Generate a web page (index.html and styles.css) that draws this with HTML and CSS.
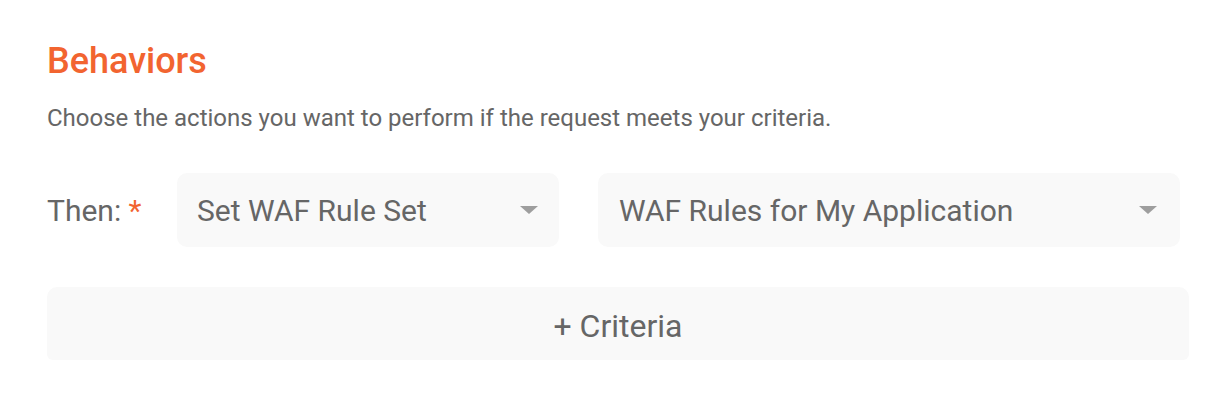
FILE: index.html
```html
<!DOCTYPE html>
<html>
<head>
<meta charset="utf-8">
<link rel="stylesheet" href="styles.css">
</head>
<body>
<div class="section">
  <h2 class="title">Behaviors</h2>
  <p class="desc">Choose the actions you want to perform if the request meets your criteria.</p>
  <div class="row">
    <div class="label">Then: <span class="req">*</span></div>
    <div class="select sel1">
      <span class="value">Set WAF Rule Set</span>
      <span class="caret"></span>
    </div>
    <div class="select sel2">
      <span class="value">WAF Rules for My Application</span>
      <span class="caret"></span>
    </div>
  </div>
  <div class="criteria">+ Criteria</div>
</div>
</body>
</html>
```
FILE: styles.css
```css
html, body {
  margin: 0;
  padding: 0;
  background: #ffffff;
}
body {
  font-family: Roboto, "Liberation Sans", sans-serif;
  color: #666666;
}
.section {
  padding: 37px 40px 0 47px;
  display: flex;
  flex-direction: column;
}
.title {
  margin: 0;
  font-size: 36px;
  font-weight: 500;
  line-height: 48px;
  color: #f26430;
}
.desc {
  margin: 18px 0 0 0;
  font-size: 24px;
  line-height: 30px;
  color: #666666;
}
.row {
  margin-top: 40px;
  display: flex;
  align-items: center;
}
.label {
  width: 130px;
  font-size: 30px;
  color: #666666;
  white-space: nowrap;
}
.req {
  color: #f26430;
}
.select {
  height: 74px;
  box-sizing: border-box;
  background: #f9f9f9;
  border-radius: 10px;
  display: flex;
  align-items: center;
  justify-content: space-between;
  padding: 0 21px 0 20px;
  font-size: 30px;
  color: #666666;
}
.sel1 {
  width: 382px;
}
.sel2 {
  width: 582px;
  margin-left: 39px;
  padding-left: 21px;
  padding-right: 23px;
}
.caret {
  width: 0;
  height: 0;
  border-left: 9px solid transparent;
  border-right: 9px solid transparent;
  border-top: 8px solid #9e9e9e;
}
.criteria {
  margin-top: 40px;
  width: 1142px;
  height: 73px;
  box-sizing: border-box;
  padding-top: 4px;
  background: #f9f9f9;
  border-radius: 10px 10px 6px 6px;
  display: flex;
  align-items: center;
  justify-content: center;
  font-size: 32px;
  color: #666666;
}
```
